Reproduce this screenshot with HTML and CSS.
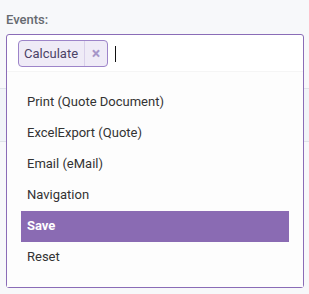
FILE: index.html
```html
<!DOCTYPE html>
<html>
<head>
<meta charset="utf-8">
<link rel="stylesheet" href="styles.css">
</head>
<body>
<div class="page">
  <div class="label">Events:</div>
  <div class="field">
    <div class="input-row">
      <span class="chip"><span class="chip-text">Calculate</span><span class="chip-x">×</span></span>
      <span class="caret"></span>
    </div>
    <ul class="menu">
      <li class="item">Print (Quote Document)</li>
      <li class="item">ExcelExport (Quote)</li>
      <li class="item">Email (eMail)</li>
      <li class="item">Navigation</li>
      <li class="item active">Save</li>
      <li class="item">Reset</li>
    </ul>
  </div>
</div>
</body>
</html>
```
FILE: styles.css
```css
html, body {
  margin: 0;
  padding: 0;
}
body {
  width: 309px;
  height: 294px;
  overflow: hidden;
  font-family: Roboto, "Liberation Sans", sans-serif;
  background-color: #f7f8fa;
  background-image: linear-gradient(to bottom,
    transparent 0, transparent 88px,
    #dfe3e9 88px, #dfe3e9 89px,
    #f1f4f8 89px, #f1f4f8 141px,
    #dfe3e9 141px, #dfe3e9 142px,
    transparent 142px);
}
.page {
  padding: 12px 6px 0 6px;
}
.label {
  font-size: 13px;
  line-height: 16px;
  color: #666a70;
  font-weight: 500;
  height: 22px;
}
.field {
  width: 296px;
  border: 1px solid #8a6cb7;
  border-radius: 3px;
  background: #ffffff;
}
.input-row {
  height: 36px;
  box-sizing: border-box;
  padding: 5px 0 0 11px;
  display: flex;
  align-items: flex-start;
}
.chip {
  display: flex;
  align-items: center;
  height: 27px;
  box-sizing: border-box;
  border: 1px solid #9d84c9;
  border-radius: 4px;
  background: #efebf7;
}
.chip-text {
  font-size: 13px;
  color: #4b4266;
  padding: 0 6px 0 5px;
  line-height: 25px;
  border-right: 1px solid #d9d0ea;
}
.chip-x {
  font-size: 16px;
  font-weight: 700;
  color: #a596c8;
  width: 22px;
  text-align: center;
  line-height: 25px;
}
.caret {
  width: 1px;
  height: 16px;
  background: #111;
  margin: 6px 0 0 7px;
}
.menu {
  list-style: none;
  margin: 0;
  padding: 15px 14px 14px 14px;
  background: #fdfdfd;
  border-top: 1px solid #f5f5f5;
}
.item {
  height: 31px;
  line-height: 30px;
  font-size: 13px;
  color: #333333;
  padding-left: 6px;
}
.item.active {
  background: #8a6bb3;
  color: #ffffff;
  font-weight: 700;
}
```
